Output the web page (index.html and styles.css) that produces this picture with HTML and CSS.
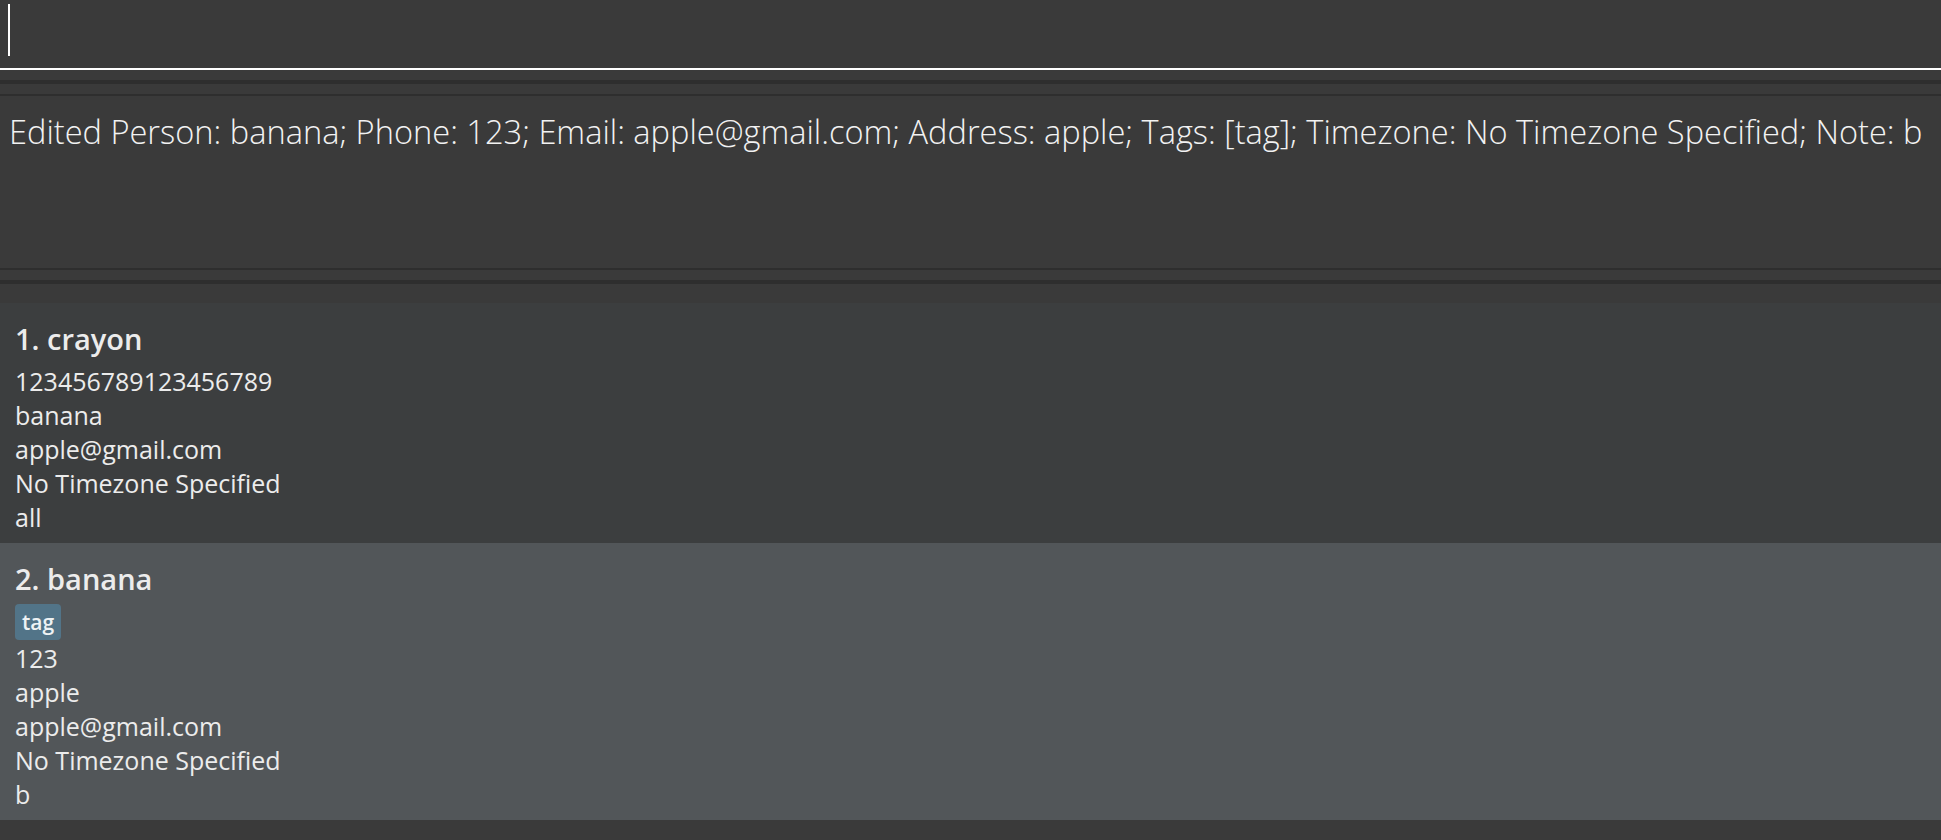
FILE: index.html
```html
<!DOCTYPE html>
<html lang="en">
<head>
<meta charset="utf-8">
<title>Address Book</title>
<link rel="stylesheet" href="styles.css">
</head>
<body>
<div class="app">
  <div class="command-box">
    <div class="command-field"><span class="caret"></span></div>
  </div>
  <div class="gap-top"></div>
  <div class="divider"></div>
  <div class="result-pane">
    <div class="result-display">Edited Person: banana; Phone: 123; Email: apple@gmail.com; Address: apple; Tags: [tag]; Timezone: No Timezone Specified; Note: b</div>
  </div>
  <div class="divider"></div>
  <div class="list-pane">
    <div class="card even">
      <div class="card-title">1. crayon</div>
      <div class="card-line">123456789123456789</div>
      <div class="card-line">banana</div>
      <div class="card-line">apple@gmail.com</div>
      <div class="card-line">No Timezone Specified</div>
      <div class="card-line">all</div>
    </div>
    <div class="card odd">
      <div class="card-title">2. banana</div>
      <div class="tags"><span class="tag">tag</span></div>
      <div class="card-line">123</div>
      <div class="card-line">apple</div>
      <div class="card-line">apple@gmail.com</div>
      <div class="card-line">No Timezone Specified</div>
      <div class="card-line">b</div>
    </div>
  </div>
</div>
</body>
</html>
```
FILE: styles.css
```css
html, body {
  margin: 0;
  padding: 0;
  background: #383838;
}
.app {
  width: 1941px;
  height: 840px;
  overflow: hidden;
  display: flex;
  flex-direction: column;
  background: #3a3a3a;
  font-family: "Open Sans", "Noto Sans", sans-serif;
}
.command-box {
  flex: none;
  height: 68px;
  border-bottom: 2px solid #ffffff;
  background: #3a3a3a;
  box-sizing: content-box;
}
.command-field {
  height: 68px;
  padding-left: 8px;
  padding-top: 4px;
  box-sizing: border-box;
}
.caret {
  display: block;
  width: 2px;
  height: 52px;
  background: #ffffff;
}
.gap-top {
  flex: none;
  height: 10px;
}
.divider {
  flex: none;
  height: 4px;
  background: #2e2e2e;
}
.result-pane {
  flex: none;
  padding: 10px 0;
}
.result-display {
  height: 176px;
  box-sizing: border-box;
  border-top: 2px solid #2e2e2e;
  border-bottom: 2px solid #2e2e2e;
  padding: 13px 0 0 9px;
  font-weight: 300;
  font-size: 32.6px;
  line-height: 46px;
  color: #f2f2f2;
  white-space: nowrap;
}
.list-pane {
  flex: 1;
  padding-top: 19px;
  display: flex;
  flex-direction: column;
}
.card {
  flex: none;
  padding: 14px 15px 9px 15px;
  color: #ececec;
}
.card.even {
  background: #3c3e3f;
}
.card.odd {
  background: #525659;
}
.card-title {
  font-weight: 600;
  font-size: 29px;
  line-height: 43px;
  margin-bottom: 4px;
}
.card-line {
  font-size: 25px;
  line-height: 34px;
}
.tags {
  display: flex;
  height: 36px;
  margin-bottom: 1px;
}
.tag {
  display: flex;
  align-items: center;
  height: 36px;
  padding: 0 7px;
  box-sizing: border-box;
  background: #527488;
  border-radius: 4px;
  font-size: 21px;
  font-weight: 600;
  color: #eef2f4;
}
```
